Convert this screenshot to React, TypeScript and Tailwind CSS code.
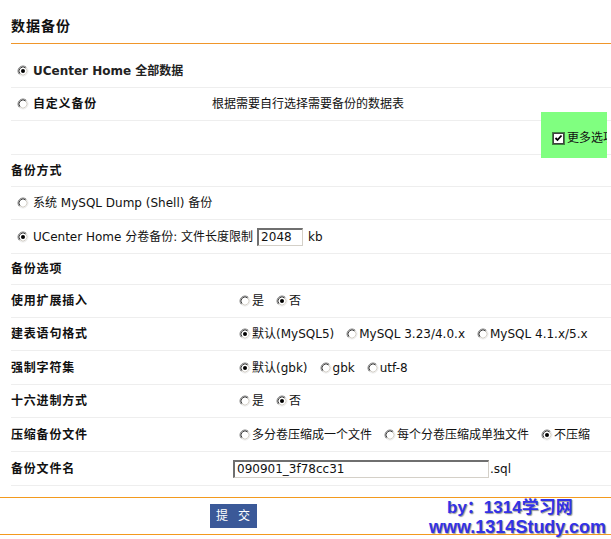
import React from 'react';

function Radio({ checked }: { checked?: boolean }) {
  return (
    <svg width="12" height="12" viewBox="0 0 12 12" className="shrink-0">
      <circle cx="6" cy="6" r="5" fill="#fff" />
      <path d="M2.46 9.54A5 5 0 0 1 9.54 2.46" fill="none" stroke="#808080" />
      <path d="M9.54 2.46A5 5 0 0 1 2.46 9.54" fill="none" stroke="#ececec" />
      <path d="M3.17 8.83A4 4 0 0 1 8.83 3.17" fill="none" stroke="#404040" />
      <path d="M8.83 3.17A4 4 0 0 1 3.17 8.83" fill="none" stroke="#d4d0c8" />
      {checked && <circle cx="6" cy="6" r="2" fill="#000" />}
    </svg>
  );
}

function CheckBox() {
  return (
    <svg width="13" height="13" viewBox="0 0 13 13" className="shrink-0">
      <rect x="0.5" y="0.5" width="12" height="12" fill="none" stroke="#000" strokeDasharray="1 1" />
      <rect x="1.5" y="1.5" width="10" height="10" fill="#fff" stroke="#404040" />
      <path d="M3.5 6l2 2 4-4.5" fill="none" stroke="#000" strokeWidth="1.8" />
    </svg>
  );
}

type Opt = { label: string; checked?: boolean };

const options: { label: string; h: string; opts: Opt[] }[] = [
  { label: '使用扩展插入', h: 'h-[33px]', opts: [{ label: '是' }, { label: '否', checked: true }] },
  {
    label: '建表语句格式',
    h: 'h-[33px]',
    opts: [{ label: '默认(MySQL5)', checked: true }, { label: 'MySQL 3.23/4.0.x' }, { label: 'MySQL 4.1.x/5.x' }],
  },
  { label: '强制字符集', h: 'h-[34px]', opts: [{ label: '默认(gbk)', checked: true }, { label: 'gbk' }, { label: 'utf-8' }] },
  { label: '十六进制方式', h: 'h-[33px]', opts: [{ label: '是' }, { label: '否', checked: true }] },
  {
    label: '压缩备份文件',
    h: 'h-[34px]',
    opts: [{ label: '多分卷压缩成一个文件' }, { label: '每个分卷压缩成单独文件' }, { label: '不压缩', checked: true }],
  },
];

const row = 'flex items-center border-b border-[#eeeeee]';
const bold = 'font-bold tracking-[0.8px]';

export default function App() {
  return (
    <div className="relative w-[611px] h-[539px] overflow-hidden bg-white text-[12px] text-[#111] font-['DejaVu_Sans','Noto_Sans_CJK_SC',sans-serif]">
      <div className="ml-[11px] h-[44px] pt-[9px] flex items-center border-b border-[#f0962a]">
        <h1 className="text-[14px] font-bold tracking-[1px]">数据备份</h1>
      </div>

      <div className="ml-[11px] mt-[10px]">
        <div className={`${row} h-[34px] pl-[6px] gap-[4px]`}>
          <Radio checked />
          <span className="font-bold text-[#222]">UCenter Home 全部数据</span>
        </div>
        <div className={`${row} h-[33px] pl-[6px]`}>
          <div className="w-[195px] flex items-center gap-[4px]">
            <Radio />
            <span className={bold}>自定义备份</span>
          </div>
          <span>根据需要自行选择需要备份的数据表</span>
        </div>
        <div className={`${row} relative h-[34px]`}>
          <div className="absolute right-[4px] top-[-9px] w-[66px] h-[46px] overflow-hidden bg-[#80ff80] pl-[11px] pt-[6px] flex items-center gap-[2px] whitespace-nowrap">
            <CheckBox />
            <span>更多选项</span>
          </div>
        </div>

        <div className={`${row} h-[32px]`}>
          <span className={bold}>备份方式</span>
        </div>
        <div className={`${row} h-[33px] pl-[6px] gap-[4px]`}>
          <Radio />
          <span>系统 MySQL Dump (Shell) 备份</span>
        </div>
        <div className={`${row} h-[34px] pl-[6px] gap-[4px] whitespace-nowrap`}>
          <Radio checked />
          <span>UCenter Home 分卷备份: 文件长度限制</span>
          <input
            readOnly
            value="2048"
            className="w-[46px] h-[18px] px-[2px] text-[12px] outline-none border-t-2 border-l-2 border-t-[#6f6f6f] border-l-[#6f6f6f] border-r border-b border-r-[#d4d0c8] border-b-[#d4d0c8]"
          />
          <span className="ml-[1px]">kb</span>
        </div>

        <div className={`${row} h-[31px]`}>
          <span className={bold}>备份选项</span>
        </div>
        {options.map((o) => (
          <div key={o.label} className={`${row} ${o.h}`}>
            <span className={`${bold} w-[228px] shrink-0`}>{o.label}</span>
            <div className="flex items-center gap-[12px] whitespace-nowrap">
              {o.opts.map((p) => (
                <label key={p.label} className="flex items-center gap-[1px]">
                  <Radio checked={p.checked} />
                  <span>{p.label}</span>
                </label>
              ))}
            </div>
          </div>
        ))}
        <div className={`${row} h-[34px]`}>
          <span className={`${bold} w-[222px] shrink-0`}>备份文件名</span>
          <input
            readOnly
            value="090901_3f78cc31"
            className="w-[256px] h-[18px] px-[2px] text-[12px] outline-none border-t-2 border-l-2 border-t-[#6f6f6f] border-l-[#6f6f6f] border-r border-b border-r-[#d4d0c8] border-b-[#d4d0c8]"
          />
          <span className="ml-[1px]">.sql</span>
        </div>
      </div>

      <div className="mt-[11px] py-[6px] border-t border-b border-[#f39a1e]">
        <button className="ml-[210px] w-[47px] h-[24px] bg-[#3b5998] text-white text-[12px] tracking-[3px] pl-[2px]">
          提 交
        </button>
      </div>

      <div className="absolute left-[447px] top-[498px] text-[17px] leading-[20px] font-bold text-[#3232e6] [text-shadow:1px_1px_1px_#9a9a9a] font-['Liberation_Sans','Noto_Sans_CJK_SC',sans-serif] whitespace-nowrap">
        by：1314学习网
      </div>
      <div className="absolute left-[429px] top-[517px] text-[18px] leading-[20px] font-bold text-[#3232e6] [text-shadow:1px_1px_1px_#9a9a9a] font-['Liberation_Sans',sans-serif] whitespace-nowrap">
        www.1314Study.com
      </div>
    </div>
  );
}
